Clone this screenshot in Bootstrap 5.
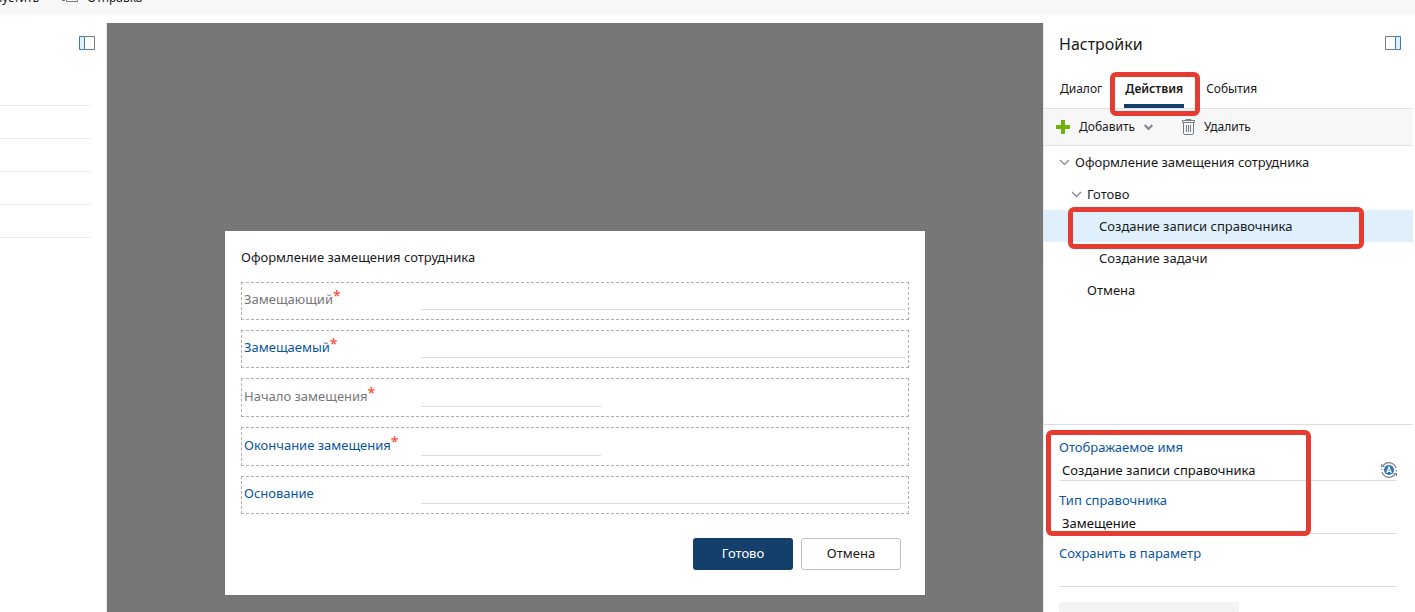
<!DOCTYPE html>
<html lang="ru">
<head>
<meta charset="utf-8">
<meta name="viewport" content="width=device-width, initial-scale=1">
<title>Настройки диалога</title>
<link href="https://cdn.jsdelivr.net/npm/bootstrap@5.3.0/dist/css/bootstrap.min.css" rel="stylesheet">
<style>
  body { font-family: "Noto Sans", "Open Sans", sans-serif; font-size: 13px; line-height: 20px; color: #1a1a1a; background: #fff; }
  button { color: inherit; font-size: inherit; line-height: 20px; }
  svg { display: block; flex: none; }
  .ribbon { height: 15px; background: #f7f7f7; margin-bottom: 8px; font-size: 12px; }
  .ribbon button { margin-bottom: 7px; }
  .ribbon-run { width: 39px; }
  .ribbon-send { margin-left: 23px; }
  .palette { width: 107px; border-right: 1px solid #e6e6e6; }
  .palette-head { height: 82px; padding: 12px 11px 0 0; }
  .palette-slot { height: 33px; margin-right: 15px; border-bottom: 1px solid #ebebeb; }
  .palette-slot:nth-child(2) { height: 1px; }
  .canvas { background: #777; padding-top: 208px; min-width: 0; }
  .dialog-card { width: 100%; max-width: 700px; padding: 16px 16px 25px; background: #fff; }
  .dialog-title { font-size: 13px; line-height: 20px; margin-bottom: 15px; }
  .field-box { border: 1px dashed #b0b0b0; padding: 0 2px 9px; margin-bottom: 10px; }
  .field-box label { width: 177px; padding-top: 6px; color: #0b56a0; }
  .field-box label.locked { color: #777; }
  .field-box input { height: 27px; }
  .date-box label { padding-top: 7px; }
  .date-box input { width: 180px; height: 28px; }
  .star { color: #ff3b1f; font-size: 14px; line-height: 10px; vertical-align: 3px; }
  .line-input { border: 0; border-bottom: 1px solid #ddd; border-radius: 0; background: transparent; color: #111; outline: 0; min-width: 0; padding: 0 3px; }
  .dlg-actions { padding: 14px 8px 0 0; }
  .dlg-btn { width: 100px; height: 32px; padding: 0; border-radius: 3px; font-size: 13px; }
  .dlg-main { background: #153f6b; color: #fff; }
  .dlg-alt { border: 1px solid #c0c2c4; color: #1a1a1a; }
  .settings { width: 372px; padding-right: 2px; border-left: 1px solid #e6e6e6; }
  .settings-title { font-size: 16px; line-height: 24px; }
  .settings-head { padding: 9px 12px 0 15px; height: 49px; }
  .panel-icon { margin-top: 3px; }
  .tab-row { height: 37px; padding-left: 14px; gap: 20px; border-bottom: 1px solid #e2e2e2; font-size: 12px; }
  .tab-row button { padding: 7px 2px 9px; height: 36px; }
  .tab-row .chosen { padding: 7px 1px 5px; font-weight: 600; border-bottom: 4px solid #153f6b !important; }
  .tools { height: 37px; background: #f7f7f7; border-bottom: 1px solid #e2e2e2; padding-left: 12px; font-size: 12px; }
  .tools button { line-height: 22px; gap: 9px; }
  .tools button + button { margin-left: 29px; }
  .tree { height: 279px; border-bottom: 1px solid #ddd; }
  .tree-row { height: 32px; gap: 5px; }
  .lvl-1 { padding-left: 15px; } .lvl-2 { padding-left: 27px; } .lvl-3 { padding-left: 55px; } .leaf-2 { padding-left: 43px; }
  .picked { background: #dfeffc; }
  .props { padding: 12px 16px 0 15px; }
  .prop { height: 53px; }
  .prop label { color: #0b56a0; height: 20px; }
  .prop-line { height: 24px; border-bottom: 1px solid #ddd; }
  .prop-line input { border: 0; height: 23px; padding-top: 2px; }
  .prop-line svg { margin-top: 2px; }
  .stub { width: 180px; height: 32px; background: #f3f3f3; border-radius: 3px; margin-top: 6px; }
  .marker { position: absolute; border: 5px solid #e53b31; border-radius: 6px; z-index: 2; pointer-events: none; }
  .marker-tab { inset: 0 -16px -8px -14px; }
  .marker-row { inset: -3px 49px -7px 24px; }
  .marker-props { left: 2px; right: 102px; top: 5px; height: 106px; }
</style>
</head>
<body class="vh-100 overflow-hidden d-flex flex-column">
<header class="ribbon d-flex align-items-end overflow-hidden flex-shrink-0">
  <button class="ribbon-run border-0 bg-transparent p-0 d-flex justify-content-end overflow-hidden">Запустить</button>
  <button class="ribbon-send border-0 bg-transparent p-0 d-flex align-items-end">
    <svg width="17" height="20" viewBox="0 0 17 20" class="me-2" fill="none" stroke="#747c84"><path d="M4.500 3v10.500h11V3M0 8.500h3M0 12.500h3"/></svg>
    Отправка
  </button>
</header>
<div class="d-flex flex-grow-1 overflow-hidden">
  <aside class="palette flex-shrink-0">
    <div class="palette-head d-flex justify-content-end">
      <svg width="16" height="16" viewBox="0 0 16 16"><path d="M5.500 1.500h10v13h-10" fill="#fff" stroke="#747c84"/><path d="M.5 1.500h5v13h-5z" fill="#e2f0fb" stroke="#3a7ab5"/></svg>
    </div>
    <div class="palette-slot"></div><div class="palette-slot"></div><div class="palette-slot"></div><div class="palette-slot"></div><div class="palette-slot"></div>
  </aside>
  <main class="canvas flex-grow-1 d-flex justify-content-center align-items-start">
    <form class="dialog-card">
      <h1 class="dialog-title fw-normal">Оформление замещения сотрудника</h1>
      <div class="field-box d-flex align-items-start"><label class="locked" for="f1">Замещающий<span class="star">*</span></label><input id="f1" class="line-input flex-grow-1"></div>
      <div class="field-box d-flex align-items-start"><label for="f2">Замещаемый<span class="star">*</span></label><input id="f2" class="line-input flex-grow-1"></div>
      <div class="field-box date-box d-flex align-items-start"><label class="locked" for="f3">Начало замещения<span class="star">*</span></label><input id="f3" class="line-input"></div>
      <div class="field-box date-box d-flex align-items-start"><label for="f4">Окончание замещения<span class="star">*</span></label><input id="f4" class="line-input"></div>
      <div class="field-box d-flex align-items-start"><label for="f5">Основание</label><input id="f5" class="line-input flex-grow-1"></div>
      <div class="dlg-actions d-flex justify-content-end gap-2">
        <button type="button" class="btn dlg-btn dlg-main">Готово</button>
        <button type="button" class="btn dlg-btn dlg-alt">Отмена</button>
      </div>
    </form>
  </main>
  <aside class="settings flex-shrink-0">
    <div class="settings-head d-flex justify-content-between">
      <h2 class="settings-title fw-normal m-0">Настройки</h2>
      <svg width="16" height="16" viewBox="0 0 16 16" class="panel-icon"><path d="M10.500 1.500H.5v13h10" fill="#fff" stroke="#747c84"/><path d="M10.500 1.500h5v13h-5z" fill="#e2f0fb" stroke="#3a7ab5"/></svg>
    </div>
    <nav class="tab-row d-flex">
      <button class="border-0 bg-transparent">Диалог</button>
      <div class="position-relative"><button class="chosen border-0 bg-transparent">Действия</button><span class="marker marker-tab"></span></div>
      <button class="border-0 bg-transparent">События</button>
    </nav>
    <div class="tools d-flex align-items-center">
      <button class="border-0 bg-transparent p-0 d-flex align-items-center">
        <svg width="14" height="14" viewBox="0 0 14 14"><path d="M5 0h4v5h5v4H9v5H5V9H0V5h5z" fill="#6db30b"/></svg>Добавить
        <svg width="9" height="7" viewBox="0 0 9 7" fill="none" stroke="#7c858d" stroke-width="2"><path d="M.7 1l3.800 4 3.800-4"/></svg>
      </button>
      <button class="border-0 bg-transparent p-0 d-flex align-items-center">
        <svg width="13" height="16" viewBox="0 0 13 16" fill="none" stroke="#747c84"><path d="M.5 1.500h12v2H.5zM4 1V.5h5V1M1.500 4v10q0 1.500 1.500 1.500h7q1.500 0 1.500-1.500V4M4.500 6v7M6.500 6v7M8.500 6v7"/></svg>Удалить
      </button>
    </div>
    <div class="tree">
      <div class="tree-row lvl-1 d-flex align-items-center"><svg width="11" height="7" viewBox="0 0 11 7" fill="none" stroke="#7c858d" stroke-width="1.200"><path d="M1 1l4.500 4.500L10 1"/></svg>Оформление замещения сотрудника</div>
      <div class="tree-row lvl-2 d-flex align-items-center"><svg width="11" height="7" viewBox="0 0 11 7" fill="none" stroke="#7c858d" stroke-width="1.200"><path d="M1 1l4.500 4.500L10 1"/></svg>Готово</div>
      <div class="tree-row lvl-3 picked position-relative d-flex align-items-center">Создание записи справочника<span class="marker marker-row"></span></div>
      <div class="tree-row lvl-3 d-flex align-items-center">Создание задачи</div>
      <div class="tree-row leaf-2 d-flex align-items-center">Отмена</div>
    </div>
    <div class="props position-relative">
      <span class="marker marker-props"></span>
      <div class="prop"><label class="d-block" for="p1">Отображаемое имя</label>
        <div class="prop-line d-flex align-items-center"><input id="p1" class="line-input flex-grow-1" value="Создание записи справочника">
          <svg width="16" height="16" viewBox="0 0 16 16"><g fill="none" stroke="#7c858d" stroke-width="1.200"><path d="M2 3.800A7.300 7.300 0 0 1 15 6.200M14 12.200A7.300 7.300 0 0 1 1 9.800"/><path d="M.6 1.800v2.600h2.800M15.400 14.200v-2.600h-2.800M.7 6.500v1.500M15.300 8v1.500"/></g><circle cx="8" cy="8" r="5" fill="#2f76b5"/><path d="M5.600 11L8 5l2.400 6M6.500 9.300h3" fill="none" stroke="#fff" stroke-width="1.200"/></svg>
        </div></div>
      <div class="prop"><label class="d-block" for="p2">Тип справочника</label>
        <div class="prop-line d-flex align-items-center"><input id="p2" class="line-input flex-grow-1" value="Замещение"></div></div>
      <div class="prop"><label class="d-block" for="p3">Сохранить в параметр</label>
        <div class="prop-line d-flex align-items-center"><input id="p3" class="line-input flex-grow-1"></div></div>
      <div class="stub"></div>
    </div>
  </aside>
</div>
<script src="https://cdn.jsdelivr.net/npm/bootstrap@5.3.0/dist/js/bootstrap.bundle.min.js"></script>
</body>
</html>
